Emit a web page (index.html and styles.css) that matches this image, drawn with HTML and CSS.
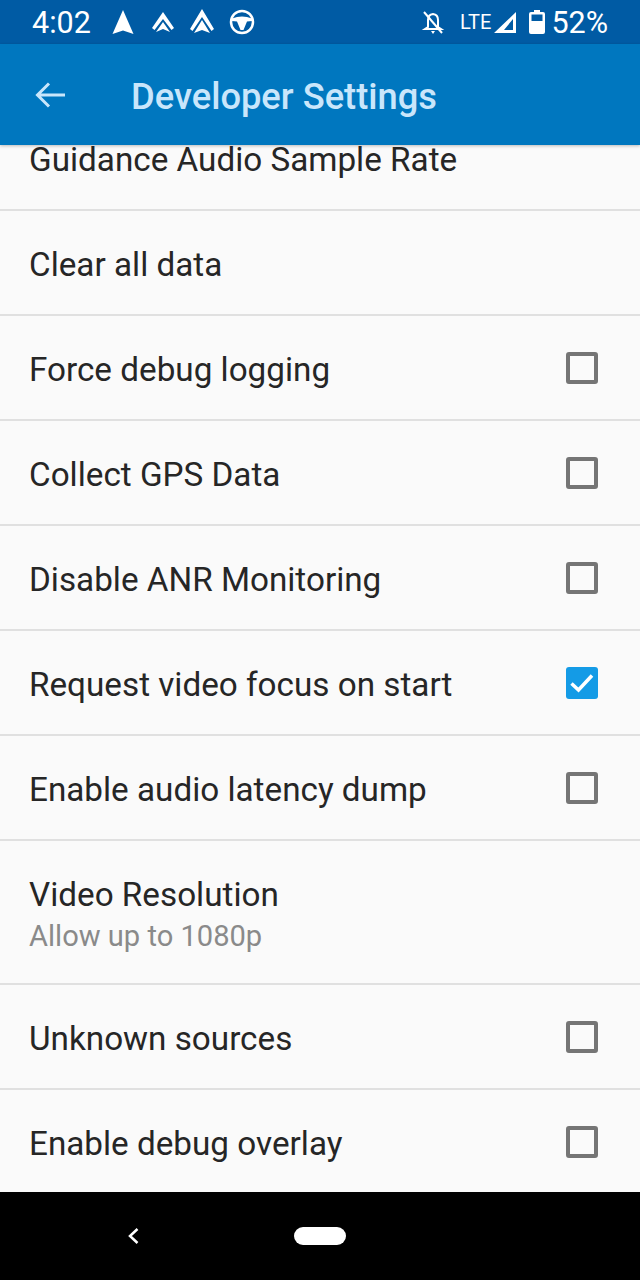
FILE: index.html
```html
<!doctype html>
<html lang="en">

<head>
    <meta charset="UTF-8">
    <title>Developer Settings</title>
    <link rel="stylesheet" href="styles.css">
</head>

<body>
    <div class="status-bar">
        <span class="status-time">4:02</span>
        <svg class="status-icon" width="24" height="28" viewBox="0 0 24 28"><path d="M12 2 L22.500 26 L12 22.500 L1.500 26 Z" fill="#fff"/></svg>
        <svg class="status-icon status-icon--spaced" width="24" height="26" viewBox="0 0 24 26"><path d="M12 3 L23 19 L20.500 21 L12 10 L3.500 21 L1 19 Z" fill="#fff"/><path d="M12 13 L19 23 L12 20 L5 23 Z" fill="#fff"/></svg>
        <svg class="status-icon" width="26" height="28" viewBox="0 0 26 28"><path d="M13 1 L25 21 L22.500 23 L13 9 L3.500 23 L1 21 Z" fill="#fff"/><path d="M13 12 L21 25 L13 22 L5 25 Z" fill="#fff"/></svg>
        <svg class="status-icon" width="26" height="26" viewBox="0 0 26 26"><circle cx="13" cy="13" r="11" fill="none" stroke="#fff" stroke-width="2.500"/><path d="M3 9.500 Q13 5.500 23 9.500 L23 12 L18 12.500 L14.500 21 L11.500 21 L8 12.500 L3 12 Z" fill="#fff"/></svg>
        <div class="status-right">
            <svg width="24" height="26" viewBox="0 0 24 26"><path d="M7 18 L7 11 Q7 5.500 12 5 Q17 5.500 17 11 L17 18 L20 20 L4 20 Z" fill="none" stroke="#fff" stroke-width="2"/><path d="M10 22 L14 22 L12 25 Z" fill="#fff"/><path d="M3 3 L21 24" stroke="#fff" stroke-width="2"/></svg>
            <span class="status-lte">LTE</span>
            <svg width="24" height="24" viewBox="0 0 24 24"><path d="M23 2 L23 23 L1 23 Z M20 9 L11 20 L20 20 Z" fill="#fff" fill-rule="evenodd"/></svg>
            <svg class="status-battery" width="16" height="24" viewBox="0 0 16 24"><path d="M5 0 L11 0 L11 2 L14 2 Q16 2 16 4 L16 22 Q16 24 14 24 L2 24 Q0 24 0 22 L0 4 Q0 2 2 2 L5 2 Z M2.500 4.500 L2.500 11 L13.500 11 L13.500 4.500 Z" fill="#fff" fill-rule="evenodd"/></svg>
            <span class="status-percent">52%</span>
        </div>
    </div>

    <header class="toolbar">
        <svg class="toolbar-back" width="32" height="28" viewBox="0 0 32 28"><path d="M30 14 L3 14 M14 2.500 L2.500 14 L14 25.500" fill="none" stroke="#c9e6fb" stroke-width="3"/></svg>
        <h1 class="toolbar-title">Developer Settings</h1>
    </header>

    <main class="settings">
        <div class="settings-list">
            <div class="row"><span class="row-label">Guidance Audio Sample Rate</span></div>
            <div class="row"><span class="row-label">Clear all data</span></div>
            <div class="row"><span class="row-label">Force debug logging</span><span class="checkbox"></span></div>
            <div class="row"><span class="row-label">Collect GPS Data</span><span class="checkbox"></span></div>
            <div class="row"><span class="row-label">Disable ANR Monitoring</span><span class="checkbox"></span></div>
            <div class="row">
                <span class="row-label">Request video focus on start</span>
                <span class="checkbox checkbox--on">
                    <svg width="32" height="32" viewBox="0 0 32 32"><path d="M5.500 16.500 L12.500 23 L26 8.500" fill="none" stroke="#fff" stroke-width="3.500"/></svg>
                </span>
            </div>
            <div class="row"><span class="row-label">Enable audio latency dump</span><span class="checkbox"></span></div>
            <div class="row row--tall">
                <div>
                    <div class="row-label">Video Resolution</div>
                    <div class="row-sub">Allow up to 1080p</div>
                </div>
            </div>
            <div class="row"><span class="row-label">Unknown sources</span><span class="checkbox"></span></div>
            <div class="row"><span class="row-label">Enable debug overlay</span><span class="checkbox"></span></div>
        </div>
    </main>

    <nav class="nav-bar">
        <svg class="nav-back" width="14" height="20" viewBox="0 0 14 20"><path d="M11.500 3 L4 10 L11.500 17" fill="none" stroke="#fff" stroke-width="2.500"/></svg>
        <span class="nav-home"></span>
    </nav>
</body>

</html>
```

FILE: styles.css
```css
html, body {
    margin: 0;
    height: 100%;
}

body {
    width: 640px;
    height: 1280px;
    display: flex;
    flex-direction: column;
    overflow: hidden;
    font-family: Roboto, "Liberation Sans", sans-serif;
    background-color: #fafafa;
}

.status-bar {
    height: 44px;
    flex: none;
    display: flex;
    align-items: center;
    padding: 0 32px;
    gap: 14px;
    background-color: #005ba4;
    color: #ffffff;
}

.status-time {
    font-size: 30.500px;
    margin-right: 6px;
}

.status-icon--spaced {
    margin-left: 2px;
}

.status-right {
    margin-left: auto;
    display: flex;
    align-items: center;
    gap: 2px;
}

.status-lte {
    font-size: 20px;
    margin-left: 13px;
}

.status-battery {
    margin-left: 10px;
}

.status-percent {
    font-size: 30.500px;
    margin-left: 4px;
}

.toolbar {
    height: 101px;
    flex: none;
    display: flex;
    align-items: center;
    padding: 0 35px;
    background-color: #0077bf;
    box-shadow: 0 1px 3px rgba(0, 0, 0, 0.25);
    position: relative;
    z-index: 1;
}

.toolbar-title {
    margin: 4px 0 0 64px;
    font-size: 36.300px;
    font-weight: 500;
    color: #c9e6fb;
}

.settings {
    flex: 1;
    overflow: hidden;
}

.settings-list {
    margin-top: -39px;
}

.row {
    height: 105px;
    box-sizing: border-box;
    display: flex;
    align-items: center;
    justify-content: space-between;
    padding: 0 42px 0 29px;
    border-bottom: 2px solid #e0e0e0;
}

.row--tall {
    height: 144px;
    padding-bottom: 1px;
}

.row-label {
    padding-top: 4px;
    font-size: 33.250px;
    color: #262626;
}

.row-sub {
    margin-top: 5px;
    font-size: 29.100px;
    color: #8a8a8a;
}

.checkbox {
    width: 32px;
    height: 32px;
    box-sizing: border-box;
    border: 4px solid #757575;
    border-radius: 3px;
}

.checkbox--on {
    border: none;
    background-color: #149be6;
}

.checkbox--on svg {
    display: block;
}

.nav-bar {
    height: 88px;
    flex: none;
    display: flex;
    align-items: center;
    gap: 154px;
    padding-left: 126px;
    background-color: #000000;
}

.nav-back {
    display: block;
}

.nav-home {
    width: 52px;
    height: 18px;
    border-radius: 9px;
    background-color: #ffffff;
}
```
